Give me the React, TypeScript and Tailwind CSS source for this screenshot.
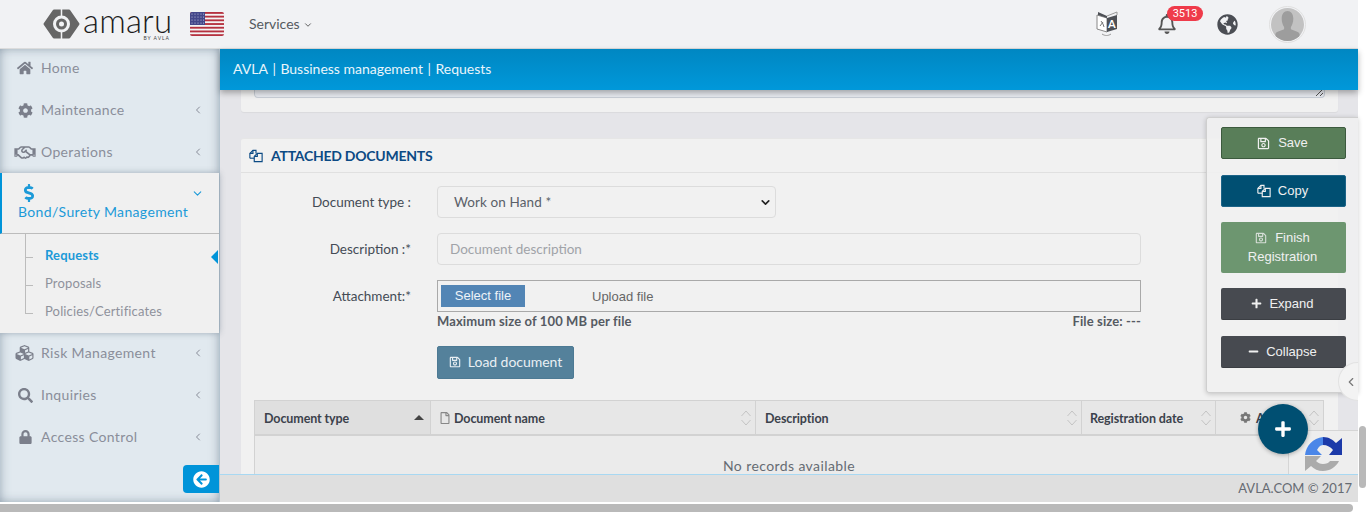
import { ChevronDown, ChevronLeft } from 'lucide-react';
import {
  FaArrowCircleLeft,
  FaCog,
  FaCubes,
  FaDollarSign,
  FaGlobeAmericas,
  FaHome,
  FaLock,
  FaMinus,
  FaPlus,
  FaRegBell,
  FaRegFile,
  FaRegHandshake,
  FaRegSave,
  FaSearch,
} from 'react-icons/fa';

const sans = "font-['Lato','Noto_Sans',sans-serif]";

// documentos superpuestos (files-o)
function FilesIcon({ className }: { className?: string }) {
  return (
    <svg viewBox="0 0 16 16" className={className} fill="none" stroke="currentColor" strokeWidth="1.3">
      <path d="M1 10.5V5l3.5-3.5H8V5" />
      <path d="M4.5 1.5V5H1" />
      <path d="M1 10.5h5" />
      <path d="M6 14.5V8.5L9.5 5H15v9.5z" />
      <path d="M9.5 5v3.5H6" />
    </svg>
  );
}

function SortIcon() {
  return (
    <svg viewBox="0 0 12 18" className="w-3 h-[18px] text-[#c4c4c4] shrink-0" fill="none" stroke="currentColor" strokeWidth="1">
      <path d="M1.5 7L6 2l4.5 5" />
      <path d="M1.5 11L6 16l4.5-5" />
    </svg>
  );
}

function Logo() {
  return (
    <div className="flex items-start w-[127px] h-[30px] relative">
      <svg viewBox="0 0 37 30" className="w-[37px] h-[30px] shrink-0">
        <path d="M11 2h15l9 13-9 13H11L2 15z" fill="#666" stroke="#666" strokeWidth="3" strokeLinejoin="round" />
        <path d="M18.500 0v7M18.500 23v7" stroke="#f1f2f4" strokeWidth="1.500" />
        <circle cx="18.5" cy="15" r="8.500" fill="#f1f2f4" />
        <circle cx="18.5" cy="15" r="5.500" fill="#666" />
        <circle cx="18.5" cy="15" r="2.500" fill="#f1f2f4" />
      </svg>
      <div className="ml-[3px] -mt-[4px] text-[33px] leading-[30px] font-light tracking-[0.2px] text-[#1c1c1c] font-['Lato',sans-serif]">amaru</div>
      <span className="absolute right-0 -bottom-[2px] text-[5px] leading-[6px] tracking-[1px] text-[#444] font-['Lato',sans-serif]">BY AVLA</span>
    </div>
  );
}

function Flag() {
  return (
    <svg viewBox="0 0 34 24" className="w-[34px] h-6 rounded-[2px]">
      <rect width="34" height="24" fill="#f4f4f4" />
      {[0, 3.7, 7.4, 11.1, 14.8, 18.5, 22.2].map((y) => (
        <rect key={y} y={y} width="34" height="1.85" fill="#b5313f" />
      ))}
      <rect width="15" height="13" fill="#44478a" />
      {[2, 5, 8, 11].map((y) =>
        [2, 5, 8, 11, 13.5].map((x) => <circle key={`${x}-${y}`} cx={x} cy={y} r="0.55" fill="#c9cbe2" />),
      )}
    </svg>
  );
}

function TranslateIcon() {
  return (
    <svg viewBox="0 0 24 26" className="w-6 h-[26px]">
      <path d="M2 4l10 3v14L2 18z" fill="#fff" stroke="#888" strokeWidth="1" />
      <path d="M12 7l10-3v14l-10 3z" fill="#4d5056" />
      <path d="M3 1l9 4v2L3 4z" fill="#4d5056" />
      <path d="M12 5l10-4v3" fill="none" stroke="#999" strokeWidth="1" />
      <path d="M5 15l3-4m-2-1l2 3 1 3" fill="none" stroke="#777" strokeWidth="1" />
      <path d="M7 23c3 2 6 2 9 0" fill="none" stroke="#999" strokeWidth="1" />
      <text x="13" y="16.500" fontSize="11" fontWeight="700" fill="#fff" fontFamily="Lato, sans-serif">A</text>
    </svg>
  );
}

function Avatar() {
  return (
    <div className="w-[37px] h-[37px] rounded-full border border-[#e0e0e0] p-[1px]">
      <svg viewBox="0 0 34 34" className="w-full h-full rounded-full">
        <rect width="34" height="34" fill="#c2c2c2" />
        <path d="M11 11c0-5 2.500-8 6-8s6 3 6 8c0 4-1.500 7-2.500 8.500V22c3 1.500 8 2 9 5v7H4.500v-7c1-3 6-3.500 9-5v-2.500C12.500 18 11 15 11 11z" fill="#9d9d9d" />
      </svg>
    </div>
  );
}

function Recaptcha() {
  return (
    <svg viewBox="0 0 38 38" className="w-[38px] h-[38px]">
      <path d="M0 18C1 9 8 1 18 0v8c-3 0-5 3-6 5l5 5z" fill="#4a86e8" />
      <path d="M18 0c6 0 10 3 13 6l6-5v17H24l4-5c-2-3-6-5-10-5z" fill="#1c3aa9" />
      <path d="M0 19h16l-5 5c2 2 4 3 7 3 3 0 6-1 7-3h9c-3 6-9 10-16 10-5 0-9-2-12-5l-6 5z" fill="#ababab" />
    </svg>
  );
}

function NavItem({ icon, label, hasChevron = true, className }: { icon: React.ReactNode; label: string; hasChevron?: boolean; className: string }) {
  return (
    <div className={`flex items-center pr-[15px] text-[#8a8e9a] text-sm ${className}`}>
      <div className="w-[41px] flex justify-end pr-[6px] text-[#7b7f8b] shrink-0">{icon}</div>
      <span className="tracking-[0.35px]">{label}</span>
      {hasChevron && <ChevronLeft className="w-[12px] h-[12px] ml-auto text-[#888c98]" />}
    </div>
  );
}

function Sidebar() {
  return (
    <aside className="w-[220px] shrink-0 flex flex-col bg-[#e1e9ef] shadow-[inset_-8px_0_8px_-6px_rgba(90,110,130,0.35),inset_8px_0_10px_-6px_rgba(90,110,130,0.35),inset_0_8px_8px_-6px_rgba(90,110,130,0.3),inset_0_-8px_8px_-6px_rgba(90,110,130,0.3)] border-r border-[#b5c4cf]">
      <NavItem icon={<FaHome className="w-4 h-4 mr-[2px]" />} label="Home" hasChevron={false} className="h-[40px] pb-[2px]" />
      <NavItem icon={<FaCog className="w-[15px] h-[15px] mr-[2px]" />} label="Maintenance" className="h-[42px]" />
      <NavItem icon={<FaRegHandshake className="w-[22px] h-[17px] -mr-[1px]" />} label="Operations" className="h-[42px]" />

      <div className="h-[160px] bg-[#f0f0f0] shadow-[0_0_6px_rgba(70,90,110,0.45)] flex flex-col relative">
        <div className="h-[61px] border-l-2 border-b border-l-[#0094d9] border-b-[#bcbcbc] text-[#1c9ad8] pl-4 relative shrink-0">
          <FaDollarSign className="w-[14px] h-[18px] mt-[11px] ml-[4px]" />
          <div className="text-sm tracking-[0.35px] leading-[20px]">Bond/Surety Management</div>
          <ChevronDown className="absolute right-[15px] top-[14px] w-[13px] h-[13px]" />
        </div>
        <div className="relative flex-1 pl-[45px] pt-[7px] text-[13px] tracking-[0.15px] text-[#8f929c] leading-[28px]">
          <div className="absolute left-[25px] top-0 h-[80px] w-[8px] border-l border-b border-[#bcbcbc]" />
          <div className="absolute left-[25px] top-[23px] w-[8px] border-t border-[#bcbcbc]" />
          <div className="absolute left-[25px] top-[51px] w-[8px] border-t border-[#bcbcbc]" />
          <div className="font-bold text-[#1c9ad8]">Requests</div>
          <div>Proposals</div>
          <div>Policies/Certificates</div>
          <div className="absolute right-[1px] top-[16px] w-0 h-0 border-y-[7px] border-y-transparent border-r-[7px] border-r-[#0094d9]" />
        </div>
      </div>

      <NavItem icon={<FaCubes className="w-[21px] h-[18px]" />} label="Risk Management" className="h-[41px] pb-[1px]" />
      <NavItem icon={<FaSearch className="w-[15px] h-[15px] mr-[2px]" />} label="Inquiries" className="h-[42px]" />
      <NavItem icon={<FaLock className="w-[13px] h-[14px] mr-[3px]" />} label="Access Control" className="h-[42px]" />

      <div className="flex justify-end mt-[7px]">
        <div className="w-[36px] h-[28px] rounded-l-[4px] bg-[#0094d9] flex items-center justify-center">
          <FaArrowCircleLeft className="w-[17px] h-[17px] text-white" />
        </div>
      </div>
    </aside>
  );
}

function FormRow({ label, children, className }: { label: string; children: React.ReactNode; className: string }) {
  return (
    <div className={`flex items-start ${className}`}>
      <label className="w-[170px] text-right text-[13.5px] text-[#444b55] leading-[32px] shrink-0">{label}</label>
      <div className="ml-[26px]">{children}</div>
    </div>
  );
}

function Th({ className, label, icon, sorted }: { className: string; label: string; icon?: React.ReactNode; sorted?: boolean }) {
  return (
    <div className={`flex items-center border-r border-[#d2d2d2] h-full ${className}`}>
      {icon}
      <span className="mt-[3px] text-[12.5px] font-bold text-[#3c424c] tracking-[-0.1px] whitespace-nowrap">{label}</span>
      <div className="ml-auto">
        {sorted ? <div className="w-0 h-0 mr-[1px] border-x-[5px] border-x-transparent border-b-[5px] border-b-[#444]" /> : <SortIcon />}
      </div>
    </div>
  );
}

function AttachedDocuments() {
  return (
    <section className="ml-[21px] mt-[26px] w-[1097px] bg-[#f1f1f1] rounded-t-[3px] border-t border-[#e6e6e6] flex flex-col h-[400px]">
      <div className="h-[34px] border-b border-[#e0e0e0] flex items-center pl-[8px] shrink-0">
        <FilesIcon className="w-[14px] h-[14px] text-[#0b4a84]" />
        <h3 className="ml-2 text-sm font-bold text-[#0b4a84] tracking-[-0.25px]">ATTACHED DOCUMENTS</h3>
      </div>

      <FormRow label="Document type :" className="mt-[13px] h-[47px]">
        <div className="w-[339px] h-[32px] rounded-[4px] border border-[#dcdcdc] bg-[#f1f1f1] flex items-center pl-4 pr-[3px] text-[13.5px] tracking-[0.1px] text-[#5a5f68]">
          Work on Hand *
          <ChevronDown className="ml-auto w-[13px] h-[13px] text-[#222] stroke-[3]" />
        </div>
      </FormRow>
      <FormRow label="Description :*" className="h-[47px]">
        <div className="w-[704px] h-[32px] rounded-[4px] border border-[#dcdcdc] flex items-center pl-3 text-[13.5px] text-[#a0a3a8]">Document description</div>
      </FormRow>
      <FormRow label="Attachment:*" className="h-[33px]">
        <div className="w-[704px] h-[32px] border border-[#a9a9a9] flex items-center pl-[3px] font-['Liberation_Sans',sans-serif] text-[13px]">
          <div className="w-[84px] h-[22px] bg-[#5285b5] text-[#eef3f8] flex items-center justify-center">Select file</div>
          <span className="ml-[67px] mt-[1px] text-[#666]">Upload file</span>
        </div>
      </FormRow>
      <div className="ml-[196px] -mt-[1px] w-[704px] flex justify-between text-[13px] font-bold tracking-[0.12px] text-[#555a62] leading-[18px]">
        <span>Maximum size of 100 MB per file</span>
        <span>File size: ---</span>
      </div>
      <div className="ml-[196px] mt-[16px]">
        <div className="w-[137px] h-[33px] pb-[2px] rounded-[2px] bg-[#54819b] border border-[#4d7a94] text-[#e9eff3] text-sm tracking-[-0.05px] flex items-center justify-center gap-[7px]">
          <FaRegSave className="w-[12px] h-[12px]" />
          Load document
        </div>
      </div>

      <div className="ml-[13px] mt-[21px] w-[1070px] flex-1 border-x border-[#d2d2d2] bg-[#ebebeb]">
        <div className="h-[36px] border-y border-[#d2d2d2] border-b-2 flex bg-[#e7e7e7]">
          <Th className="w-[176px] pl-[9px] pr-[5px] bg-[#dfdfdf]" label="Document type" sorted />
          <Th className="w-[325px] pl-[9px] pr-[3px]" label="Document name" icon={<FaRegFile className="w-[10px] h-[12px] text-[#888] mr-[4px]" />} />
          <Th className="w-[326px] pl-[9px] pr-[3px]" label="Description" />
          <Th className="w-[134px] pl-[8px] pr-[3px]" label="Registration date" />
          <Th className="flex-1 pl-[24px] pr-[3px] border-r-0" label="Actions" icon={<FaCog className="w-[11px] h-[11px] text-[#777] mr-[5px]" />} />
        </div>
        <div className="text-center text-sm tracking-[0.4px] text-[#666b73] pt-[20px]">No records available</div>
      </div>
    </section>
  );
}

function ActionPanel() {
  const btn = 'h-[32px] rounded-[2px] flex items-center justify-center gap-[7px] text-[13px] pr-[2px]';
  return (
    <div className="absolute left-[1206px] top-[117px] w-[152px] h-[276px] bg-[#f1f1f1]/85 border-l border-t border-b border-[#cfcfcf] rounded-l-[3px] pl-[14px] pr-[12px] pt-[9px] flex flex-col shadow-[0_1px_5px_rgba(0,0,0,0.2)] font-['Liberation_Sans',sans-serif] text-[#f0f0f0]">
      <div className={`${btn} bg-[#597e59] border border-[#3c5a3e]`}>
        <FaRegSave className="w-[13px] h-[13px]" /> <span className="ml-[1px]">Save</span>
      </div>
      <div className={`${btn} mt-[16px] bg-[#004f72] border border-[#1d6488]`}>
        <FilesIcon className="w-[14px] h-[14px]" /> <span>Copy</span>
      </div>
      <div className="mt-[15px] h-[51px] rounded-[2px] bg-[#6d9670] text-[13px] text-center leading-[19px] pt-[6px] pr-[2px]">
        <FaRegSave className="inline w-[12px] h-[12px] mr-[8px] -mt-[2px] opacity-80" />Finish
        <br />
        Registration
      </div>
      <div className={`${btn} mt-[15px] bg-[#474a50] border-b border-[#3b3e43]`}>
        <FaPlus className="w-[11px] h-[11px]" /> Expand
      </div>
      <div className={`${btn} mt-[16px] bg-[#474a50] border-b border-[#3b3e43]`}>
        <FaMinus className="w-[11px] h-[11px]" /> Collapse
      </div>
    </div>
  );
}

export default function App() {
  return (
    <div className={`relative w-[1366px] h-[512px] overflow-hidden bg-white flex flex-col ${sans}`}>
      <div className="flex h-[504px] shrink-0">
        <div className="w-[1358px] h-[502px] flex flex-col shrink-0">
          <header className="h-[49px] shrink-0 bg-[#f1f2f4] border-b border-[#dcdcdc] flex items-center pl-[43px] pr-[52px]">
            <Logo />
            <div className="ml-5"><Flag /></div>
            <div className="ml-[25px] flex items-center gap-[3px] text-sm text-[#555a60]">
              Services
              <ChevronDown className="w-[10px] h-[10px] mt-[1px] text-[#444]" />
            </div>
            <div className="ml-auto flex items-center">
              <TranslateIcon />
              <div className="relative ml-[38px] w-[20px] flex justify-center">
                <FaRegBell className="w-[18px] h-[20px] text-[#555]" />
                <span className="absolute left-[10px] -top-[8px] w-[36px] h-[15px] rounded-full bg-[#ef3b4a] text-[#fff] text-[11px] leading-[15px] text-center font-['Roboto',sans-serif]">3513</span>
              </div>
              <FaGlobeAmericas className="ml-[40px] w-[21px] h-[21px] text-[#4b4e54]" />
              <div className="ml-[31px]"><Avatar /></div>
            </div>
          </header>

          <div className="flex flex-1 min-h-0">
            <Sidebar />
            <main className="flex-1 min-w-0 flex flex-col bg-[#e5e5e9]">
              <div className="h-[41px] shrink-0 relative z-10 bg-gradient-to-b from-[#0087c2] to-[#0098da] shadow-[0_3px_6px_rgba(0,0,0,0.3)] flex items-center pl-[13px] pb-[1px] text-sm text-[#e9f5fb] gap-[4.5px]">
                <span>AVLA</span><span>|</span><span>Bussiness management</span><span>|</span><span>Requests</span>
              </div>
              <div className="flex-1 min-h-0 overflow-hidden">
                <div className="ml-[21px] w-[1097px] h-[22px] bg-[#f1f1f1] rounded-b-[3px] shadow-[0_1px_1px_rgba(0,0,0,0.05)]">
                  <div className="relative ml-[13px] w-[1071px] h-[8px] rounded-b-[4px] border-x border-b border-[#c8ced6] bg-[#e8ebf1]">
                    <svg viewBox="0 0 8 8" className="absolute right-[1px] bottom-[1px] w-2 h-2 text-[#555]" stroke="currentColor" strokeWidth="1">
                      <path d="M1 8l7-7M5 8l3-3" />
                    </svg>
                  </div>
                </div>
                <AttachedDocuments />
              </div>
              <footer className="h-[28px] shrink-0 relative z-10 bg-[#dfdfdf] border-t border-[#a8d8f2] flex items-center justify-end pr-[6px] text-[13px] text-[#666b73]">
                AVLA.COM © 2017
              </footer>
            </main>
          </div>
        </div>
        <div className="w-2 shrink-0 pl-[1px]">
          <div className="mt-[426px] h-[62px] rounded-[4px] bg-[#b9b9b9]" />
        </div>
      </div>
      <div className="h-2 w-[1353px] rounded-r-[4px] bg-[#b9b9b9] shrink-0" />

      {/* flotantes sobre el contenido */}
      <ActionPanel />
      <div className="absolute left-[1338px] top-[362px] w-[20px] h-[39px] rounded-l-full bg-[#f3f3f3] border-l border-y border-[#e2e2e2] flex items-center justify-end">
        <ChevronLeft className="w-[14px] h-[14px] text-[#777]" />
      </div>
      <div className="absolute left-[1288px] top-[430px] w-[70px] h-[44px] bg-[#eeeeee] border-l border-t border-[#d5d5d5] overflow-hidden z-20">
        <div className="ml-[16px] mt-[6px]"><Recaptcha /></div>
      </div>
      <div className="absolute left-[1258px] top-[404px] w-[50px] h-[50px] rounded-full bg-[#004f72] shadow-[0_1px_4px_rgba(0,0,0,0.3)] flex items-center justify-center z-30">
        <FaPlus className="w-[18px] h-[18px] text-white" />
      </div>
    </div>
  );
}
